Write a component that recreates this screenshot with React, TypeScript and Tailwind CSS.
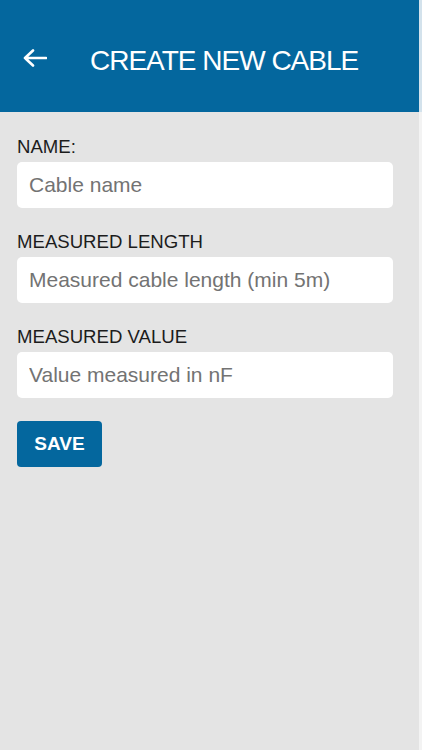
import React from "react";

const font = { fontFamily: '"Liberation Sans", Arial, Helvetica, sans-serif' };

function Field({ label, placeholder }: { label: string; placeholder: string }) {
  return (
    <div className="flex flex-col">
      <div className="h-[22px] leading-[22px] text-[18.6px] text-[#1c1c1c]">{label}</div>
      <input
        readOnly
        placeholder={placeholder}
        className="mt-[4px] h-[46px] w-full rounded-[5px] bg-white px-[12px] text-[21px] text-[#222] placeholder:text-[#737373] outline-none"
        style={font}
      />
    </div>
  );
}

export default function App() {
  return (
    <div className="flex min-h-[750px] w-full" style={font}>
      <div className="flex w-[419px] flex-col bg-[#e4e4e4]">
        <header className="flex h-[112px] items-center bg-[#04679e] pt-[10px]">
          <svg width="24" height="18" viewBox="0 0 24 18" className="ml-[23px] mt-[-6px]" fill="none">
            <path d="M23 9H2M10 1.5L2 9l8 7.5" stroke="white" strokeWidth="2.6" strokeLinecap="round" strokeLinejoin="round" />
          </svg>
          <h1 className="ml-[43px] text-[28px] font-normal tracking-[-1px] text-white">CREATE NEW CABLE</h1>
        </header>
        <main className="flex flex-col gap-[23px] px-[17px] pr-[26px] pt-[24px]">
          <Field label="NAME:" placeholder="Cable name" />
          <Field label="MEASURED LENGTH" placeholder="Measured cable length (min 5m)" />
          <Field label="MEASURED VALUE" placeholder="Value measured in nF" />
          <div>
            <button className="h-[46px] w-[85px] rounded-[4px] bg-[#04679e] text-[19px] font-bold text-white">
              SAVE
            </button>
          </div>
        </main>
      </div>
      <div className="flex flex-1 flex-col">
        <div className="h-[112px] bg-[#d3e2ec]" />
        <div className="flex-1 bg-[#f3f3f3]" />
      </div>
    </div>
  );
}
